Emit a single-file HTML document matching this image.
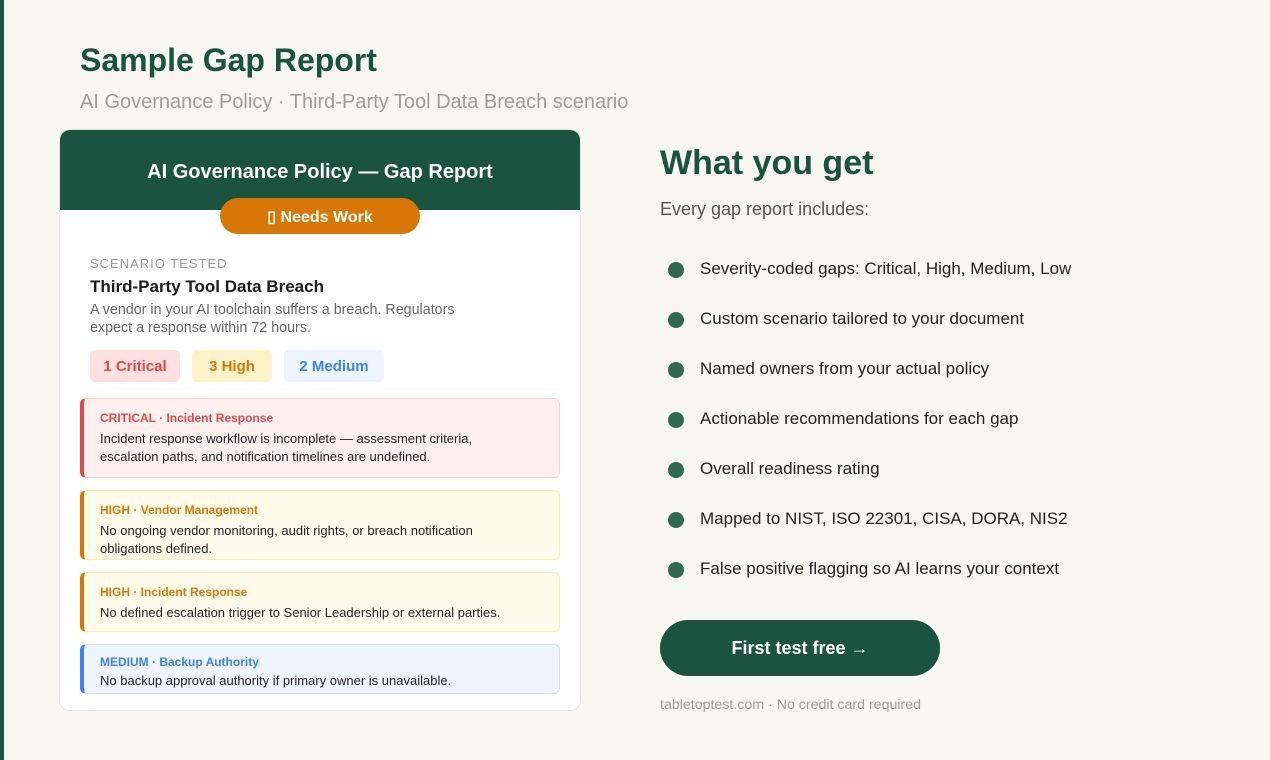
<!DOCTYPE html>
<html><head><meta charset="utf-8"><style>
*{margin:0;padding:0;box-sizing:border-box}
body{width:1270px;height:760px;background:#f7f6f2;font-family:"Liberation Sans",sans-serif;position:relative;overflow:hidden}
.a{position:absolute;white-space:nowrap}
.stripe{left:0;top:0;width:4px;height:760px;background:#1a5441}
.card{left:60px;top:130px;width:520px;height:580px;background:#fff;box-shadow:0 0 0 1px #e6e4df;border-radius:10px;overflow:hidden}
.hdr{left:0;top:0;width:520px;height:80px;background:#1a5441}
.gap{position:absolute;left:20px;width:480px;border-radius:6px;border:1px solid;border-left-width:4px;padding:11px 16px 0 16px}
.gap .t{font-size:12px;font-weight:bold;line-height:16px}
.gap .b{font-size:13px;color:#222;line-height:18px;margin-top:4px;white-space:normal;width:385px}
.pill{position:absolute;top:220px;height:32px;border-radius:5px;font-size:15px;font-weight:bold;text-align:center;line-height:34px}
.li{left:668px;font-size:17px;color:#222}
.li:before{content:"";position:absolute;left:0;top:1px;width:16px;height:16px;border-radius:50%;background:#2d6a4f}
.li span{position:absolute;left:32px;top:-1px}
</style></head><body>
<div class="a stripe"></div>
<div class="a" style="left:80px;top:42px;font-size:32px;font-weight:bold;color:#1a5441">Sample Gap Report</div>
<div class="a" style="left:80px;top:91px;font-size:20px;color:#a09c96">AI Governance Policy · Third-Party Tool Data Breach scenario</div>
<div class="a card">
 <div class="a hdr"></div>
 <div class="a" style="left:0;width:520px;top:31px;text-align:center;font-size:20px;font-weight:bold;color:#fff">AI Governance Policy — Gap Report</div>
 <div class="a" style="left:160px;top:68px;width:200px;height:36px;border-radius:18px;background:#d97706;color:#fff;text-align:center;line-height:40px;font-size:16px;font-weight:bold">▯ Needs Work</div>
 <div class="a" style="left:30px;top:126px;font-size:13px;letter-spacing:1px;color:#999">SCENARIO TESTED</div>
 <div class="a" style="left:30px;top:147px;font-size:17px;font-weight:bold;color:#1c1c1c">Third-Party Tool Data Breach</div>
 <div class="a" style="left:30px;top:171px;font-size:14.3px;line-height:18px;color:#666">A vendor in your AI toolchain suffers a breach. Regulators<br>expect a response within 72 hours.</div>
 <div class="pill" style="left:30px;width:90px;background:#fde0e0;color:#e04848">1 Critical</div>
 <div class="pill" style="left:132px;width:80px;background:#fdf2c8;color:#d97706">3 High</div>
 <div class="pill" style="left:224px;width:100px;background:#eef4fe;color:#3b82f6">2 Medium</div>
 <div class="gap" style="top:268px;height:80px;background:#fff0f0;border-color:#fcd4d4;border-left-color:#e04848"><div class="t" style="color:#e04848">CRITICAL · Incident Response</div><div class="b">Incident response workflow is incomplete — assessment criteria, escalation paths, and notification timelines are undefined.</div></div>
 <div class="gap" style="top:360px;height:70px;background:#fffbeb;border-color:#fbecb0;border-left-color:#d97706"><div class="t" style="color:#d97706">HIGH · Vendor Management</div><div class="b">No ongoing vendor monitoring, audit rights, or breach notification obligations defined.</div></div>
 <div class="gap" style="top:442px;height:60px;background:#fffbeb;border-color:#fbecb0;border-left-color:#d97706"><div class="t" style="color:#d97706">HIGH · Incident Response</div><div class="b" style="width:420px">No defined escalation trigger to Senior Leadership or external parties.</div></div>
 <div class="gap" style="top:514px;height:50px;background:#eef5ff;border-color:#cfe0fb;border-left-color:#3b82f6;padding-top:9px"><div class="t" style="color:#3b82f6">MEDIUM · Backup Authority</div><div class="b" style="margin-top:2px;width:420px">No backup approval authority if primary owner is unavailable.</div></div>
</div>
<div class="a" style="left:660px;top:144px;font-size:34px;font-weight:bold;color:#1a5441">What you get</div>
<div class="a" style="left:660px;top:199px;font-size:18px;color:#555">Every gap report includes:</div>
<div class="a li" style="top:261px"><span style="top:-2px">Severity-coded gaps: Critical, High, Medium, Low</span></div>
<div class="a li" style="top:311px"><span style="top:-2px">Custom scenario tailored to your document</span></div>
<div class="a li" style="top:361px"><span style="top:-2px">Named owners from your actual policy</span></div>
<div class="a li" style="top:411px"><span style="top:-2px">Actionable recommendations for each gap</span></div>
<div class="a li" style="top:461px"><span style="top:-2px">Overall readiness rating</span></div>
<div class="a li" style="top:511px"><span style="top:-2px">Mapped to NIST, ISO 22301, CISA, DORA, NIS2</span></div>
<div class="a li" style="top:561px"><span style="top:-2px">False positive flagging so AI learns your context</span></div>
<div class="a" style="left:660px;top:620px;width:280px;height:56px;border-radius:28px;background:#1a5441;color:#fff;text-align:center;line-height:56px;font-size:18px;font-weight:bold">First test free →</div>
<div class="a" style="left:660px;top:697px;font-size:14.2px;color:#a09c96">tabletoptest.com · No credit card required</div>
</body></html>
